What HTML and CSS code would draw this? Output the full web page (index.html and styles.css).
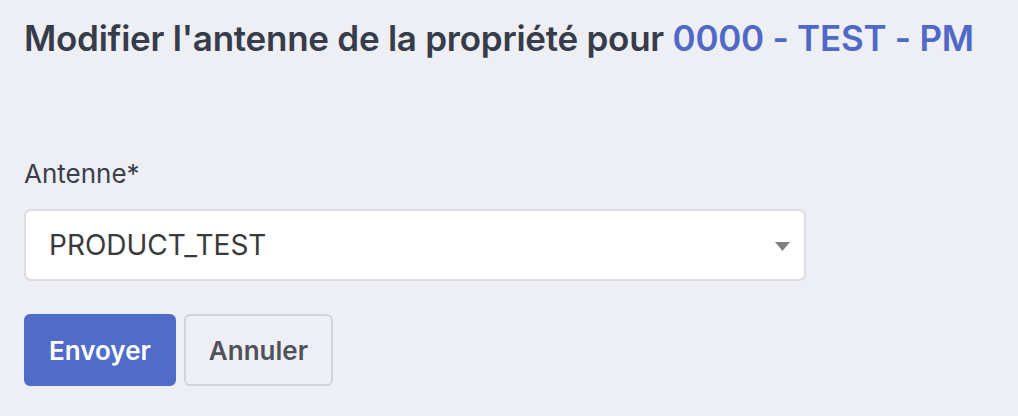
FILE: index.html
```html
<!DOCTYPE html>
<html lang="fr">
<head>
  <meta charset="UTF-8" />
  <title>Modifier l'antenne</title>
  <link rel="stylesheet" href="styles.css">
</head>
<body>
  <div class="page">
    <h1 class="title">Modifier l'antenne de la propriété pour <span class="title-ref">0000 - TEST - PM</span></h1>

    <form class="form">
      <label class="field-label" for="antenna">Antenne*</label>
      <div class="select" id="antenna">
        <span class="select-value">PRODUCT_TEST</span>
        <svg class="select-arrow" width="15" height="9" viewBox="0 0 15 9">
          <polygon points="0,0 15,0 7.5,9" fill="#808080" />
        </svg>
      </div>

      <div class="actions">
        <button type="submit" class="btn btn-primary">Envoyer</button>
        <button type="button" class="btn btn-secondary">Annuler</button>
      </div>
    </form>
  </div>
</body>
</html>
```

FILE: styles.css
```css
* {
  box-sizing: border-box;
}

body {
  margin: 0;
  background: #eeeff4;
  font-family: 'Inter', 'Noto Sans', sans-serif;
  color: #373c4a;
}

.page {
  padding: 16px 24px;
}

.title {
  margin: 0 0 98px;
  font-size: 35px;
  font-weight: 600;
  letter-spacing: -0.25px;
  line-height: 44px;
  white-space: nowrap;
  color: #373c4a;
}

.title-ref {
  color: #5069c7;
}

.field-label {
  display: block;
  margin-bottom: 20px;
  font-size: 26px;
  line-height: normal;
  color: #3a3f4b;
}

.select {
  width: 782px;
  height: 72px;
  display: flex;
  align-items: center;
  justify-content: space-between;
  padding: 0 14px 0 23px;
  background: #fff;
  border: 2px solid #dcdce1;
  border-radius: 7px;
}

.select-value {
  font-size: 28px;
  color: #3a3a3a;
}

.select-arrow {
  display: block;
  margin-top: 2px;
}

.actions {
  display: flex;
  gap: 8px;
  margin-top: 33px;
}

.btn {
  height: 72px;
  padding: 0 23px;
  font-family: inherit;
  font-size: 26px;
  font-weight: 600;
  border-radius: 6px;
  border: 2px solid transparent;
  cursor: pointer;
}

.btn-primary {
  background: #516bc8;
  border-color: #516bc8;
  color: #fff;
}

.btn-secondary {
  background: #eeeff4;
  border-color: #d3d4d9;
  color: #505259;
}
```
